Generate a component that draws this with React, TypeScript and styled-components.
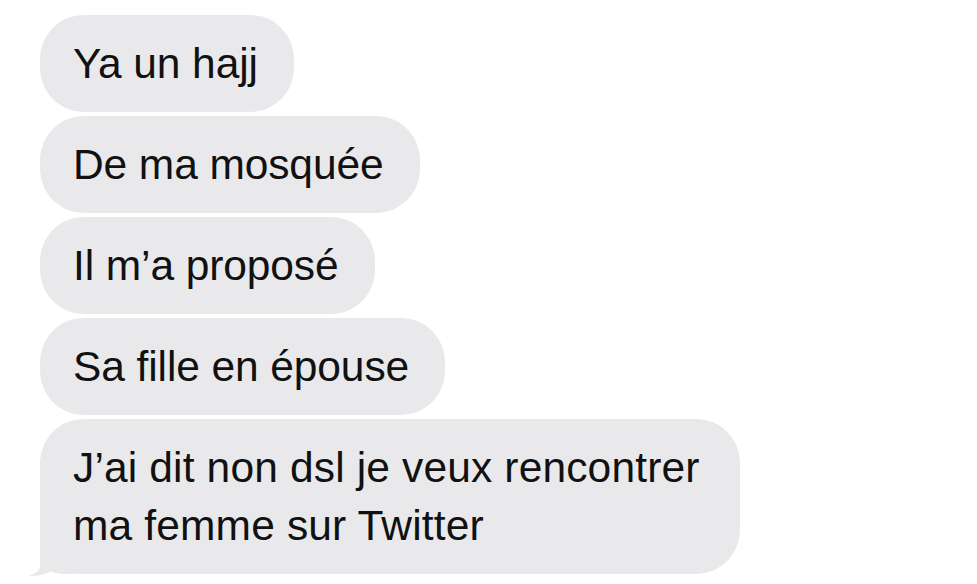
import React from "react";
import styled, { createGlobalStyle } from "styled-components";

const GlobalStyle = createGlobalStyle`
  html, body {
    margin: 0;
    padding: 0;
    background: #ffffff;
  }
  body {
    font-family: "Liberation Sans", Arial, sans-serif;
  }
`;

const Thread = styled.div`
  width: 977px;
  height: 584px;
  box-sizing: border-box;
  padding: 15px 0 0 40px;
  display: flex;
  flex-direction: column;
  align-items: flex-start;
  gap: 4px;
  background: #ffffff;
  overflow: hidden;
`;

const Bubble = styled.div<{ $tail?: boolean }>`
  position: relative;
  box-sizing: border-box;
  background: #e9e9eb;
  color: #111111;
  font-family: "Liberation Sans", Arial, sans-serif;
  font-size: 42.5px;
  line-height: 58px;
  padding: 20px ${(p) => (p.$tail ? "40px" : "36px")} 19px 33px;
  border-radius: 44px;
  white-space: pre-line;
  letter-spacing: ${(p) => (p.$tail ? "0.15px" : "-0.1px")};
`;

const Tail = styled.svg`
  position: absolute;
  left: -12px;
  bottom: -2px;
  width: 50px;
  height: 50px;
`;

const Line = styled.span`
  position: relative;
`;

const messages = [
  "Ya un hajj",
  "De ma mosquée",
  "Il m’a proposé",
  "Sa fille en épouse",
  "J’ai dit non dsl je veux rencontrer\nma femme sur Twitter",
];

export default function App() {
  return (
    <>
      <GlobalStyle />
      <Thread>
        {messages.map((m, i) => {
          const last = i === messages.length - 1;
          return (
            <Bubble key={i} $tail={last}>
              {last && (
                <Tail viewBox="0 0 50 50">
                  <path
                    d="M12 0 L12 40 C12 44 8 47.5 0 50 C8 50.5 16 49 22.5 45.5 C28 47.5 34 48 40 48 L50 48 L50 0 Z"
                    fill="#e9e9eb"
                  />
                </Tail>
              )}
              <Line>{m}</Line>
            </Bubble>
          );
        })}
      </Thread>
    </>
  );
}
